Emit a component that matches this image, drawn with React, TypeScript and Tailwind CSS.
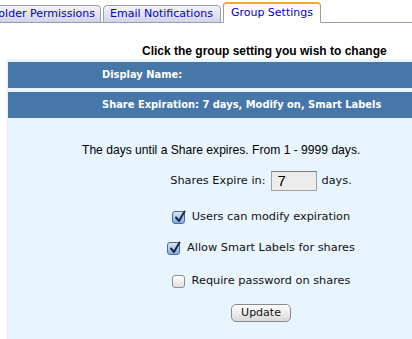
const tabFont = "font-['DejaVu_Sans',Verdana,sans-serif]";

function Check({ checked }: { checked: boolean }) {
  if (!checked) {
    return (
      <span className="inline-block h-[13px] w-[13px] shrink-0 rounded-[3px] border border-[#8d8d8d] bg-gradient-to-b from-white to-[#e2e2e2]" />
    );
  }
  return (
    <span className="relative inline-block h-[13px] w-[13px] shrink-0 rounded-[3px] border border-[#4f6a92] bg-gradient-to-b from-[#d6e6f8] to-[#86afe3]">
      <svg className="absolute left-[1px] top-[-2px]" width="12" height="13" viewBox="0 0 12 13">
        <path d="M2 7.5 L5 11 L10.5 1.5" fill="none" stroke="#1b2745" strokeWidth="2" strokeLinecap="round" strokeLinejoin="round" />
      </svg>
    </span>
  );
}

function Option({ checked, label, className }: { checked: boolean; label: string; className: string }) {
  return (
    <label className={`flex h-[16px] items-center gap-[7px] text-[11.3px] text-[#111] font-['DejaVu_Sans',sans-serif] ${className}`}>
      <Check checked={checked} />
      {label}
    </label>
  );
}

export default function App() {
  return (
    <div className="h-[339px] w-[412px] overflow-hidden bg-white font-['Liberation_Sans',Arial,sans-serif]">
      <div className={`flex h-[23px] items-end gap-[2px] border-b border-[#9a9aa8] text-[11px] ${tabFont}`}>
        <div className="flex w-[101px] shrink-0 justify-end overflow-hidden">
          <div className="mb-[-1px] flex h-[18px] shrink-0 items-center rounded-tr-[4px] border border-[#9c9cb2] bg-gradient-to-b from-[#f4f4fa] to-[#d3d3e8] pl-[7px] pr-[5px] text-[#0000cc] whitespace-nowrap">
            Folder Permissions
          </div>
        </div>
        <div className="mb-[-1px] flex h-[18px] shrink-0 items-center rounded-t-[4px] border border-[#9c9cb2] bg-gradient-to-b from-[#f4f4fa] to-[#d3d3e8] pl-[6px] pr-[7px] text-[#0000cc] whitespace-nowrap">
          Email Notifications
        </div>
        <div className="mb-[-1px] flex h-[21px] shrink-0 items-center rounded-t-[4px] border border-t-2 border-[#9a9aa8] border-t-[#f2a43a] border-b-white bg-white px-[7px] text-[#0000cc] whitespace-nowrap">
          Group Settings
        </div>
      </div>

      <p className="mt-[21px] pl-[142px] text-[12px] font-bold leading-[14px] text-black">
        Click the group setting you wish to change
      </p>

      <div className="ml-[6px] mt-[1px] h-[280px] bg-[#e8f4fe] pl-[2px] pt-[3px]">
        <div className="flex flex-col gap-[4px] font-['DejaVu_Sans_Condensed','DejaVu_Sans',sans-serif] text-[11px] font-bold text-white">
          <div className="flex h-[26px] items-center bg-[#4677a8] pl-[94px]">Display Name:</div>
          <div className="flex h-[26px] items-center bg-[#4677a8] pl-[94px]">
            Share Expiration: 7 days, Modify on, Smart Labels
          </div>
        </div>

        <p className="mt-[25px] pl-[74px] text-[12.1px] leading-[14px] text-black">
          The days until a Share expires. From 1 - 9999 days.
        </p>

        <div className="ml-[101px] flex w-[304px] flex-col items-center">
          <div className="mt-[14px] flex h-[20px] items-center gap-[5px] font-['DejaVu_Sans',sans-serif] text-[11.3px] text-[#111]">
            <span>Shares Expire in:</span>
            <span className="flex h-[20px] w-[46px] items-center border border-[#a0a0a0] border-t-[#7a7a7a] bg-[#ececec] pl-[6px] font-['Liberation_Sans',Arial,sans-serif] text-[15px] text-black">
              7
            </span>
            <span>days.</span>
          </div>
          <Option className="mt-[18px]" checked label="Users can modify expiration" />
          <Option className="mt-[15px]" checked label="Allow Smart Labels for shares" />
          <Option className="mt-[17px]" checked={false} label="Require password on shares" />
          <button className="mt-[15px] flex h-[18px] w-[60px] items-center justify-center rounded-[5px] border border-[#8a8a8a] bg-gradient-to-b from-white to-[#d9d9d9] font-['DejaVu_Sans',sans-serif] text-[11px] text-[#111]">
            Update
          </button>
        </div>
      </div>
    </div>
  );
}
